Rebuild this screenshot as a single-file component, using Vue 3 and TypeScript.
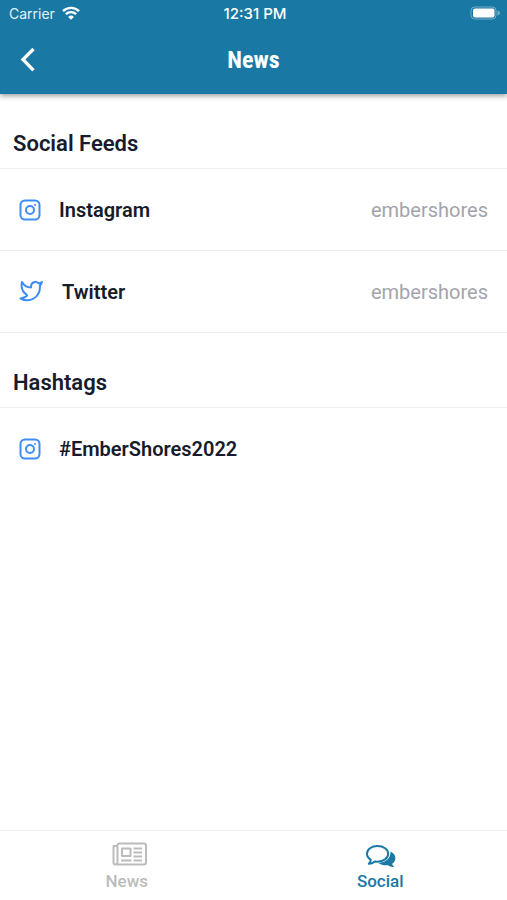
<script setup lang="ts">
import { ref } from 'vue'

type Network = 'instagram' | 'twitter'

interface Entry {
  network: Network
  label: string
  account?: string
}

interface Section {
  title: string
  entries: Entry[]
}

type Tab = 'News' | 'Social'

const sections: Section[] = [
  {
    title: 'Social Feeds',
    entries: [
      { network: 'instagram', label: 'Instagram', account: 'embershores' },
      { network: 'twitter', label: 'Twitter', account: 'embershores' },
    ],
  },
  {
    title: 'Hashtags',
    entries: [{ network: 'instagram', label: '#EmberShores2022' }],
  },
]

const tabs: Tab[] = ['News', 'Social']
const activeTab = ref<Tab>('Social')
</script>

<template>
  <div class="screen">
    <header class="header">
      <div class="status">
        <div class="carrier">
          <span>Carrier</span>
          <svg class="wifi" viewBox="0 0 18 14" aria-hidden="true">
            <path d="M1 5.2a11.4 11.4 0 0 1 16 0" />
            <path d="M3.9 8.2a7.2 7.2 0 0 1 10.2 0" />
            <path class="dot" d="M9 13.8 6.1 10.9a4.1 4.1 0 0 1 5.8 0z" />
          </svg>
        </div>
        <span class="time">12:31 PM</span>
        <svg class="battery" viewBox="0 0 31 14" aria-hidden="true">
          <rect class="shell" x="1" y="1" width="25" height="12" rx="3.5" />
          <rect class="charge" x="3" y="2.5" width="21.5" height="9" rx="2" />
          <path class="tip" d="M27.5 4.6v4.8c1.4-.4 2.5-1.3 2.5-2.4s-1.1-2-2.5-2.4z" />
        </svg>
      </div>
      <div class="navbar">
        <button class="back" type="button" aria-label="Back">
          <svg viewBox="0 0 16 26" aria-hidden="true"><path d="M13.5 2 3 12.5l10.5 10.8" /></svg>
        </button>
        <h1 class="title">News</h1>
      </div>
    </header>

    <main class="content">
      <section v-for="section in sections" :key="section.title">
        <h2 class="heading">{{ section.title }}</h2>
        <ul class="list">
          <li v-for="entry in section.entries" :key="entry.label" class="item">
            <a class="row" href="#">
              <svg v-if="entry.network === 'instagram'" class="instagram" viewBox="0 0 22 22" aria-hidden="true">
                <rect x="1.5" y="1.5" width="19" height="19" rx="4.5" />
                <circle cx="11" cy="11" r="4" />
                <circle class="dot" cx="16" cy="6" r="1" />
              </svg>
              <svg v-else class="twitter" viewBox="0 0 25 25" aria-hidden="true">
                <path d="M23 3a10.9 10.9 0 0 1-3.14 1.53 4.48 4.48 0 0 0-7.86 3v1A10.66 10.66 0 0 1 3 3s-2.5 8 4.5 12.5c1 .7.5 1.5-.7 2.2A12 12 0 0 1 1.5 19.5c9 4.5 19.5-.5 19.5-12 0-.28 0-.55-.08-.83A7.72 7.72 0 0 0 23 3z" />
              </svg>
              <span class="label">{{ entry.label }}</span>
              <span v-if="entry.account" class="account">{{ entry.account }}</span>
            </a>
          </li>
        </ul>
      </section>
    </main>

    <nav class="tabs">
      <button
        v-for="tab in tabs"
        :key="tab"
        class="tab"
        :class="{ active: tab === activeTab }"
        type="button"
        @click="activeTab = tab"
      >
        <svg v-if="tab === 'News'" class="tab-icon" viewBox="-6 0 42 26" aria-hidden="true">
          <path d="M5.5 20.5v-16a2 2 0 0 1 2-2H32a2 2 0 0 1 2 2v17a2 2 0 0 1-2 2H3.5a2 2 0 0 1-2-2V5h4M5.5 20.5a2.5 2.5 0 0 1-2 3" />
          <rect x="10" y="7.5" width="8.5" height="7.500" />
          <path d="M21.5 7.5h8.5M21.5 11.5h8.5M21.5 15.500h8.5M9 19.5h10.5M21.5 19.5h8.5" />
        </svg>
        <svg v-else class="tab-icon" viewBox="-4 -1 42 26" aria-hidden="true">
          <path d="M14.5 4C8.5 4 4 7.5 4 11.8c0 2.5 1.5 4.6 3.8 6-.1 1.8-.8 3-2 4 2.4-.1 4.5-1 6-2.4.9.2 1.8.3 2.7.3 6 0 10.7-3.500 10.7-7.900S20.500 4 14.500 4z" />
          <path class="solid" d="M27.500 9.500c3 1.400 4.900 3.800 4.900 6.700 0 2.200-1.200 4.200-3.200 5.600.2 1.500 1 2.500 2.400 3.200-2.700.2-4.900-.4-6.400-1.800-3.600.5-7.200-.2-9.800-2.300 6.800 0 12.600-4.200 12.100-11.400z" />
        </svg>
        <span>{{ tab }}</span>
      </button>
    </nav>
  </div>
</template>

<style>
body {
  margin: 0;
  background: #fff;
}
</style>

<style scoped>
.screen {
  display: flex;
  flex-direction: column;
  min-height: 100vh;
  color: #171b2c;
  font-family: Roboto, 'Liberation Sans', sans-serif;
}

svg {
  display: block;
  flex: none;
  fill: none;
  stroke: currentColor;
  stroke-width: 2;
  stroke-linejoin: round;
}

button {
  padding: 0;
  border: 0;
  background: none;
  color: inherit;
  font: inherit;
  cursor: pointer;
}

.header {
  background: #1a78a4;
  box-shadow: 0 2px 5px rgba(0, 0, 0, 0.38);
  color: #fff;
}

.status {
  display: grid;
  grid-template-columns: 1fr auto 1fr;
  align-items: center;
  height: 26px;
  padding: 0 6px 0 9px;
  font-family: Inter, 'Liberation Sans', sans-serif;
  font-size: 14px;
}

.carrier {
  display: flex;
  align-items: center;
  gap: 7px;
  color: #e3f2f8;
}

.wifi {
  width: 18px;
  height: 14px;
  color: #fff;
  stroke-width: 2.4;
}

.wifi .dot {
  fill: currentColor;
  stroke: none;
}

.time {
  font-size: 15px;
  font-weight: 500;
}

.battery {
  width: 31px;
  height: 14px;
  justify-self: end;
}

.shell {
  stroke: #75aecb;
  stroke-width: 1;
}

.charge {
  fill: #fff;
  stroke: none;
}

.tip {
  fill: #75aecb;
  stroke: none;
}

.navbar {
  display: grid;
  grid-template-columns: 1fr auto 1fr;
  align-items: center;
  height: 68px;
  padding: 0 20px;
}

.back {
  justify-self: start;
}

.back svg {
  width: 16px;
  height: 26px;
  stroke-width: 3.3;
  stroke-linejoin: miter;
}

.title {
  margin: 0;
  font-family: 'Roboto Condensed', Roboto, sans-serif;
  font-size: 24px;
  font-weight: 700;
  line-height: 28px;
}

.content {
  flex: 1;
}

.heading {
  margin: 0;
  padding: 36px 13px 10px;
  border-bottom: 1px solid #efeff1;
  font-size: 22px;
  font-weight: 600;
  line-height: 28px;
}

.list {
  margin: 0;
  padding: 0;
  list-style: none;
}

.item {
  border-bottom: 1px solid #efeff1;
}

section:last-child .item:last-child {
  border-bottom: 0;
}

.row {
  display: flex;
  align-items: center;
  gap: 18px;
  height: 81px;
  padding: 0 19px;
  color: inherit;
  font-size: 20px;
  text-decoration: none;
}

.instagram {
  width: 22px;
  height: 22px;
  color: #3c8df5;
}

.instagram .dot {
  fill: currentColor;
  stroke: none;
}

.twitter {
  width: 25px;
  height: 25px;
  color: #3c8df5;
}

.label {
  font-weight: 600;
}

.account {
  margin-left: auto;
  color: #a3a4ab;
}

.tabs {
  display: grid;
  grid-template-columns: 1fr 1fr;
  height: 69px;
  border-top: 1px solid #f0f0f0;
}

.tab {
  display: flex;
  flex-direction: column;
  align-items: center;
  padding-top: 10px;
  color: #bcbcbc;
  font-size: 17px;
  font-weight: 500;
  line-height: 28px;
}

.tab.active {
  color: #1a78a4;
}

.tab-icon {
  width: 42px;
  height: 26px;
}

.tab-icon .solid {
  fill: currentColor;
  stroke: none;
}
</style>
